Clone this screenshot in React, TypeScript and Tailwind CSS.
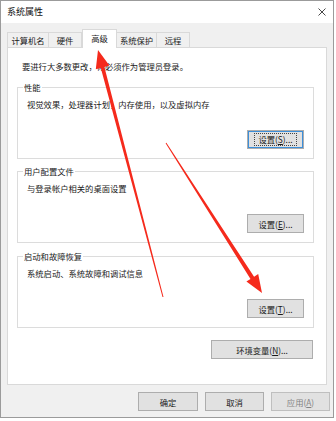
import type { ReactNode } from "react";

const font = { fontFamily: '"Noto Sans CJK SC", "Noto Sans", sans-serif' };

function Btn({
  children,
  className = "",
}: {
  children: ReactNode;
  className?: string;
}) {
  return (
    <div
      className={`h-[19px] flex items-center justify-center border border-[#adadad] bg-[#e1e1e1] text-[8.3px] leading-[12px] text-[#1a1a1a] ${className}`}
    >
      {children}
    </div>
  );
}

function Group({
  label,
  text,
  button,
  className = "",
}: {
  label: string;
  text: string;
  button: ReactNode;
  className?: string;
}) {
  return (
    <div
      className={`relative w-[297px] h-[72px] border border-[#dcdcdc] flex flex-col pt-[10px] px-[9px] pb-[9px] ${className}`}
    >
      <span className="absolute top-[-7px] left-[5px] bg-white px-[1px] text-[8.3px] leading-[12px] text-[#1a1a1a]">
        {label}
      </span>
      <div className="text-[8.3px] leading-[12px] text-[#1a1a1a]">{text}</div>
      <div className="mt-auto self-end">{button}</div>
    </div>
  );
}

const tabs = [
  { name: "计算机名", w: "w-[42px]" },
  { name: "硬件", w: "w-[33px]" },
  { name: "高级", w: "w-[35px]", active: true },
  { name: "系统保护", w: "w-[40px]" },
  { name: "远程", w: "w-[33px]" },
];

export default function App() {
  return (
    <div className="relative w-[336px] h-[421px] bg-white overflow-hidden" style={font}>
      <div className="w-[334px] h-[418px] border border-[#9b9b9b] bg-[#f0f0f0] flex flex-col">
        {/* title bar */}
        <div className="h-[22px] bg-white flex items-center justify-between pl-[6px] pr-[7px]">
          <span className="text-[9px] leading-[12px] text-[#111]">系统属性</span>
          <svg width="8" height="8" viewBox="0 0 8 8">
            <path d="M0.5 0.5L7.5 7.5M7.5 0.5L0.5 7.5" stroke="#333" strokeWidth="0.9" />
          </svg>
        </div>

        {/* tabs */}
        <div className="h-[24px] flex items-end pl-[6px]">
          {tabs.map((t, i) =>
            t.active ? (
              <div
                key={t.name}
                className={`relative ${t.w} h-[19px] -mb-px bg-white border border-b-0 border-[#d9d9d9] flex items-start justify-center pt-[2px] text-[8.3px] leading-[12px] text-[#1a1a1a]`}
              >
                {t.name}
              </div>
            ) : (
              <div
                key={t.name}
                className={`${t.w} h-[15px] bg-[#f0f0f0] border-t border-r border-[#d9d9d9] ${i === 0 ? "border-l" : ""} flex items-center justify-center text-[8.3px] leading-[12px] text-[#1a1a1a]`}
              >
                {t.name}
              </div>
            )
          )}
        </div>

        {/* panel */}
        <div className="ml-[6px] w-[320px] h-[338px] bg-white border border-[#d9d9d9] pl-[9px] pt-[12px]">
          <div className="ml-[5px] text-[8.3px] leading-[12px] text-[#1a1a1a]">
            要进行大多数更改，你必须作为管理员登录。
          </div>

          <Group
            className="mt-[15px]"
            label="性能"
            text="视觉效果，处理器计划，内存使用，以及虚拟内存"
            button={
              <Btn className="w-[57px] border-[#0078d7] shadow-[inset_0_0_0_1px_#3d8fd9]">
                <span className="border border-dotted border-[#444] px-[3px] leading-[11px]">
                  设置(<span className="underline">S</span>)...
                </span>
              </Btn>
            }
          />

          <Group
            className="mt-[12px]"
            label="用户配置文件"
            text="与登录帐户相关的桌面设置"
            button={
              <Btn className="w-[57px]">
                设置(<span className="underline">E</span>)...
              </Btn>
            }
          />

          <Group
            className="mt-[13px]"
            label="启动和故障恢复"
            text="系统启动、系统故障和调试信息"
            button={
              <Btn className="w-[57px]">
                设置(<span className="underline">T</span>)...
              </Btn>
            }
          />

          <div className="w-[297px] flex justify-end pr-[1px] mt-[12px]">
            <Btn className="w-[102px]">
              环境变量(<span className="underline">N</span>)...
            </Btn>
          </div>
        </div>

        {/* bottom buttons */}
        <div className="mt-[7px] flex justify-end gap-[7px] pr-[3px]">
          <Btn className="w-[60px]">确定</Btn>
          <Btn className="w-[59px]">取消</Btn>
          <Btn className="w-[59px] bg-[#cccccc] border-[#bfbfbf] text-[#838383]">
            应用(<span className="underline">A</span>)
          </Btn>
        </div>
      </div>

      {/* red annotation arrows */}
      <svg
        className="absolute left-0 top-0 pointer-events-none"
        width="336"
        height="421"
        viewBox="0 0 336 421"
      >
        <polygon
          fill="#f52a1c"
          points="98,50 109.4,65.6 104.4,66.9 163.5,296.9 162.5,297.1 100.8,67.9 95.8,69.2"
        />
        <polygon
          fill="#f52a1c"
          points="262,293 258.2,274 254.1,276.7 166.4,142.7 165.6,143.3 250.5,278.9 246.4,281.6"
        />
      </svg>
    </div>
  );
}
